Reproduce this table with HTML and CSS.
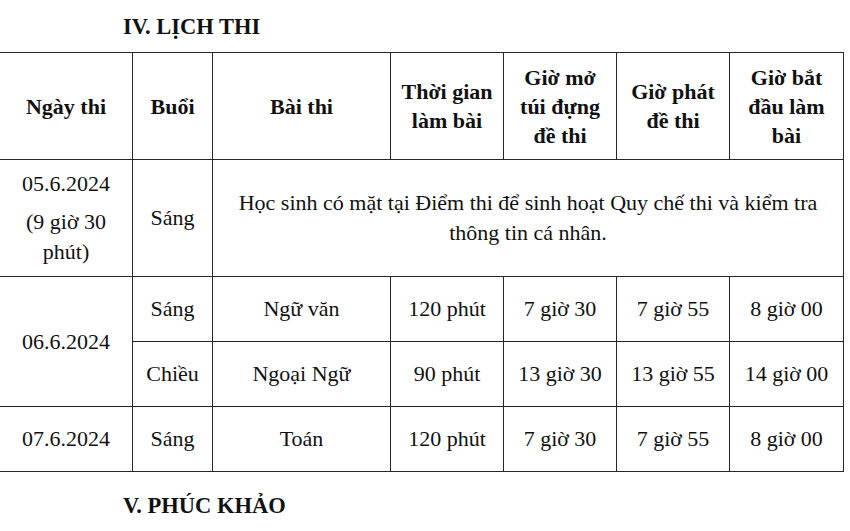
FILE: index.html
```html
<!DOCTYPE html>
<html lang="vi">
<head>
<meta charset="utf-8">
<link rel="stylesheet" href="styles.css">
</head>
<body>
<div class="page">
  <h2 class="section-title first">IV. LỊCH THI</h2>
  <table class="schedule">
    <colgroup>
      <col class="c1"><col class="c2"><col class="c3"><col class="c4"><col class="c5"><col class="c6"><col class="c7">
    </colgroup>
    <thead>
      <tr class="head-row">
        <th>Ngày thi</th>
        <th>Buổi</th>
        <th>Bài thi</th>
        <th>Thời gian<br>làm bài</th>
        <th>Giờ mở<br>túi đựng<br>đề thi</th>
        <th>Giờ phát<br>đề thi</th>
        <th>Giờ bắt<br>đầu làm<br>bài</th>
      </tr>
    </thead>
    <tbody>
      <tr class="tall-row">
        <td><div class="date">05.6.2024</div><div class="date-note">(9 giờ 30<br>phút)</div></td>
        <td>Sáng</td>
        <td colspan="5" class="note">Học sinh có mặt tại Điểm thi để sinh hoạt Quy chế thi và kiểm tra<br>thông tin cá nhân.</td>
      </tr>
      <tr class="row">
        <td rowspan="2">06.6.2024</td>
        <td>Sáng</td>
        <td>Ngữ văn</td>
        <td>120 phút</td>
        <td>7 giờ 30</td>
        <td>7 giờ 55</td>
        <td>8 giờ 00</td>
      </tr>
      <tr class="row">
        <td>Chiều</td>
        <td>Ngoại Ngữ</td>
        <td>90 phút</td>
        <td>13 giờ 30</td>
        <td>13 giờ 55</td>
        <td>14 giờ 00</td>
      </tr>
      <tr class="row">
        <td>07.6.2024</td>
        <td>Sáng</td>
        <td>Toán</td>
        <td>120 phút</td>
        <td>7 giờ 30</td>
        <td>7 giờ 55</td>
        <td>8 giờ 00</td>
      </tr>
    </tbody>
  </table>
  <h2 class="section-title second">V. PHÚC KHẢO</h2>
</div>
</body>
</html>
```
FILE: styles.css
```css
html, body {
  margin: 0;
  padding: 0;
  background: #ffffff;
}
body {
  width: 850px;
  height: 531px;
  overflow: hidden;
  font-family: "Liberation Serif", "Times New Roman", serif;
  color: #111111;
}
.page {
  display: flex;
  flex-direction: column;
}
.section-title {
  margin: 0;
  padding-left: 123px;
  font-size: 22.5px;
  line-height: 24px;
  font-weight: bold;
  color: #111111;
}
.section-title.first {
  padding-top: 15px;
  margin-bottom: 13px;
}
.section-title.second {
  margin-top: 22px;
}
.schedule {
  border-collapse: collapse;
  table-layout: fixed;
  width: 844px;
  margin-left: -1px;
  font-size: 22px;
}
.c1 { width: 133px; }
.c2 { width: 80px; }
.c3 { width: 178px; }
.c4 { width: 113px; }
.c5 { width: 113px; }
.c6 { width: 113px; }
.c7 { width: 114px; }
.schedule th,
.schedule td {
  border: 1px solid #262626;
  text-align: center;
  vertical-align: middle;
  padding: 0 4px;
}
.schedule th {
  font-weight: bold;
  line-height: 29px;
}
.schedule td {
  font-weight: normal;
  line-height: 30px;
}
.head-row { height: 107px; }
.tall-row { height: 117px; }
.row { height: 65px; }
.date-note {
  margin-top: 8px;
}
.schedule td.note {
  padding: 0 4px;
}
```
